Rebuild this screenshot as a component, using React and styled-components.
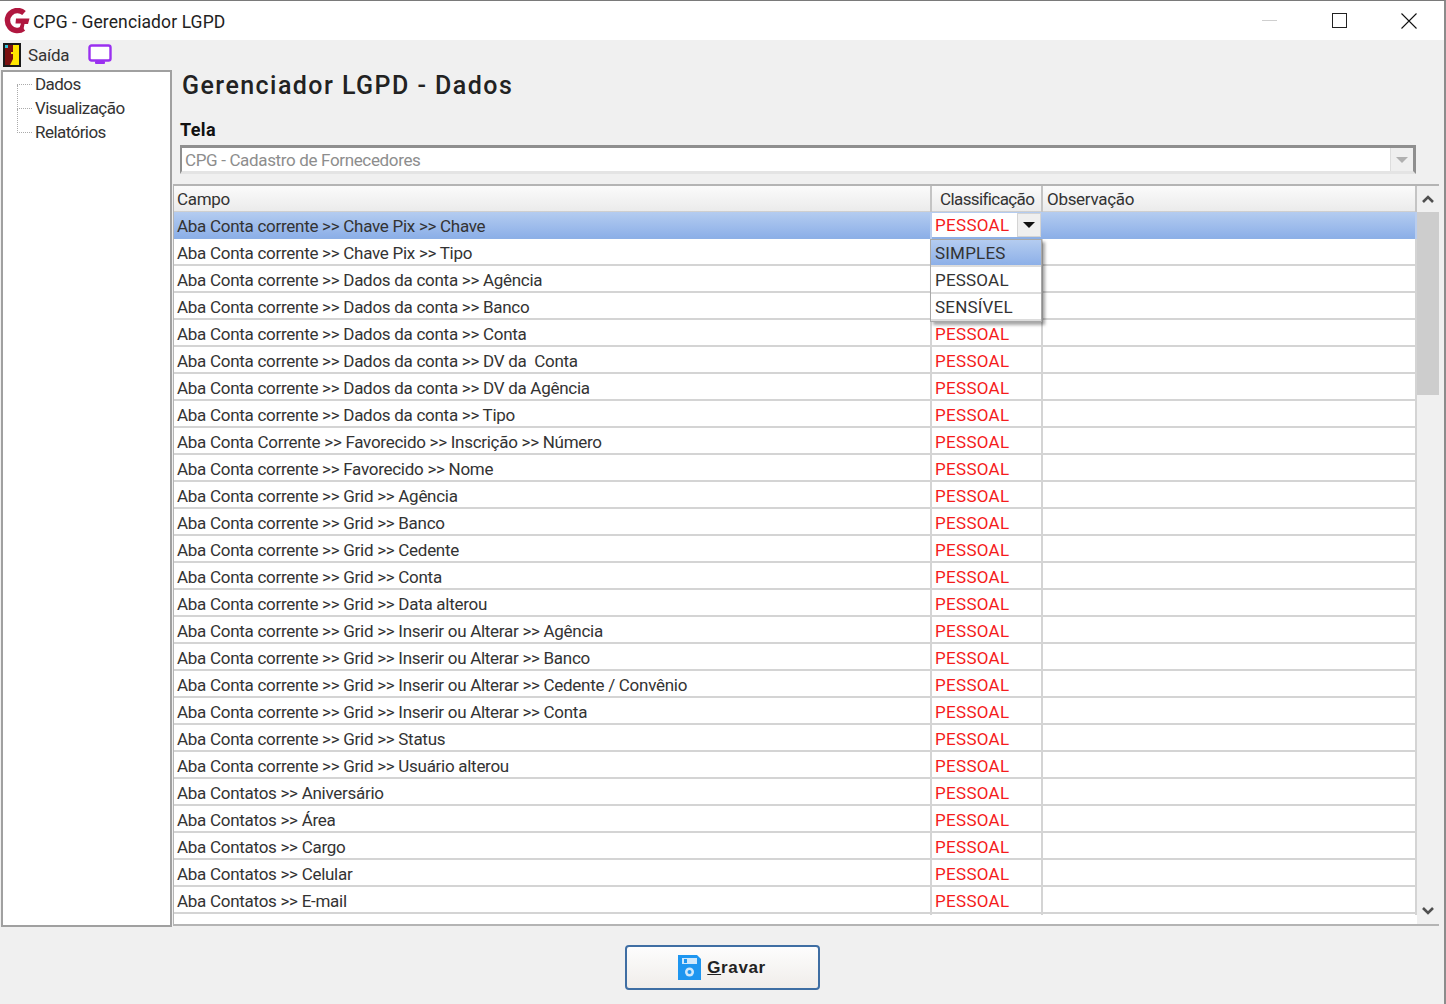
import React from "react";
import styled, { createGlobalStyle } from "styled-components";

const UI_FONT = `Roboto, "Liberation Sans", Arial, sans-serif`;

const GlobalStyle = createGlobalStyle`
  html, body { margin: 0; padding: 0; background: #f0f0f0; }
  * { box-sizing: border-box; }
  body { font-family: ${UI_FONT}; color: #1c1c1c; }
`;

const Win = styled.div`
  width: 1446px;
  height: 1004px;
  display: flex;
  flex-direction: column;
  border-top: 1px solid #7a7a7a;
  border-right: 2px solid #8c8c8c;
  overflow: hidden;
`;

const TitleBar = styled.div`
  height: 39px;
  background: #fff;
  display: flex;
  align-items: center;
  padding-left: 4px;
  flex: none;
`;

const TitleText = styled.span`
  font-size: 17.5px;
  letter-spacing: 0.1px;
  margin-left: 3px;
  padding-top: 2px;
  color: #222;
`;

const WinButtons = styled.div`
  margin-left: auto;
  display: flex;
  align-items: center;
`;

const WinButton = styled.div`
  width: 70px;
  height: 39px;
  display: flex;
  align-items: center;
  justify-content: center;
`;

const MinimizeGlyph = styled.span`
  width: 15px;
  height: 1px;
  background: #cfcfcf;
`;

const MaximizeGlyph = styled.span`
  width: 15px;
  height: 15px;
  border: 1.5px solid #222;
`;

const Toolbar = styled.div`
  height: 30px;
  flex: none;
  display: flex;
  align-items: center;
  padding-left: 3px;
  font-size: 17px;
  letter-spacing: -0.2px;
  color: #333;
`;

const ToolLabel = styled.span`
  margin-left: 7px;
  margin-right: 19px;
  padding-bottom: 1px;
`;

const Body = styled.div`
  height: 857px;
  flex: none;
  display: flex;
  padding-left: 1px;
`;

const Sidebar = styled.div`
  width: 171px;
  flex: none;
  background: #fff;
  border: 2px solid #a0a0a0;
  padding: 0 0 0 14px;
`;

const TreeItem = styled.div`
  height: 24px;
  font-size: 17px;
  letter-spacing: -0.55px;
  color: #333;
  display: flex;
  align-items: center;
`;

const TreeDots = styled.span`
  position: relative;
  width: 15px;
  margin-right: 3px;
  border-top: 1px dotted #aaa;

  &::before {
    content: "";
    position: absolute;
    left: 0;
    top: ${(p) => (p.$first ? "0" : "-24px")};
    height: ${(p) => (p.$first ? "0" : "24px")};
    border-left: 1px dotted #aaa;
  }
`;

const Main = styled.div`
  flex: 1;
  display: flex;
  flex-direction: column;
  min-width: 0;
  padding-left: 1px;
`;

const Heading = styled.h1`
  margin: 0;
  height: 51px;
  flex: none;
  padding: 0 0 0 9px;
  font-size: 25px;
  font-weight: 500;
  letter-spacing: 1.45px;
  color: #222;
  line-height: 32px;
`;

const FieldLabel = styled.div`
  font-size: 18px;
  font-weight: 700;
  letter-spacing: 0.4px;
  height: 16px;
  flex: none;
  line-height: 18px;
  padding-left: 7px;
  color: #111;
`;

const Combo = styled.div`
  height: 29px;
  flex: none;
  margin: 8px 28px 10px 7px;
  background: #fff;
  border: 3px solid #8f8f8f;
  border-bottom-color: #e4e4e4;
  border-left-width: 2px;
  display: flex;
  align-items: center;
  font-size: 17px;
  letter-spacing: -0.35px;
  color: #8d8d8d;
  padding-left: 3px;
`;

const ComboArrow = styled.div`
  margin-left: auto;
  width: 23px;
  height: 100%;
  background: #efefef;
  border-left: 1px solid #ddd;
  display: flex;
  align-items: center;
  justify-content: center;
`;

const Caret = styled.span`
  width: 0;
  height: 0;
  border-left: ${(p) => p.$size}px solid transparent;
  border-right: ${(p) => p.$size}px solid transparent;
  border-top: ${(p) => p.$size}px solid ${(p) => p.$color};
`;

const GridBox = styled.div`
  position: relative;
  height: 742px;
  flex: none;
  margin-right: 5px;
  display: flex;
  background: #fff;
  border: 2px solid #b4b4b4;
  border-left-width: 1px;
`;

const GridMain = styled.div`
  width: 1243px;
  flex: none;
  display: flex;
  flex-direction: column;
`;

const HeaderRow = styled.div`
  display: grid;
  grid-template-columns: 758px 111px 374px;
  height: 26px;
  flex: none;
  background: linear-gradient(#fbfbfb, #ebebeb);
  border-bottom: 1px solid #cfcfcf;
`;

const HeaderCell = styled.div`
  border-right: 2px solid #c4c4c4;
  padding-left: ${(p) => p.$pad}px;
  font-size: 17px;
  letter-spacing: ${(p) => p.$track}px;
  line-height: 26px;
  color: #333;
`;

const Row = styled.div`
  display: grid;
  grid-template-columns: 758px 111px 374px;
  height: 27px;
  flex: none;
  border-bottom: 2px solid ${(p) => (p.$selected ? "#8db0e6" : "#d4d4d4")};
  background: ${(p) => (p.$selected ? "linear-gradient(#b4ccf0, #8db0e8)" : "#fff")};
`;

const Cell = styled.div`
  border-right: 2px solid ${(p) => (p.$selected ? "#b9cdee" : "#d4d4d4")};
  padding-left: 3px;
  font-size: 17px;
  letter-spacing: -0.28px;
  line-height: 28px;
  color: #333;
  white-space: pre;
`;

const ClassCell = styled(Cell)`
  color: #f51c1c;
  letter-spacing: 0.3px;
`;

const EditorCell = styled.div`
  background: #fff;
  margin: 1px 2px 0 0;
  height: 24px;
  display: flex;
  align-items: center;
  justify-content: space-between;
  font-size: 17px;
  letter-spacing: 0.3px;
  color: #f51c1c;
  padding-left: 3px;
`;

const EditorArrow = styled.div`
  width: 24px;
  height: 24px;
  background: #efefef;
  border: 1px solid #d4d4d4;
  display: flex;
  align-items: center;
  justify-content: center;
`;

const Dropdown = styled.div`
  position: absolute;
  left: 756px;
  top: 53px;
  width: 112px;
  background: #fff;
  border: 1px solid #a8a8a8;
  box-shadow: 3px 3px 3px rgba(0, 0, 0, 0.35);
  z-index: 5;
`;

const DropItem = styled.div`
  height: 27px;
  line-height: 26px;
  font-size: 17px;
  padding-left: 4px;
  color: #333;
  letter-spacing: 0.2px;
  background: ${(p) => (p.$active ? "linear-gradient(#b4ccf0, #8db0e8)" : "#fff")};
  border-bottom: 2px solid #dcdcdc;
`;

const Scrollbar = styled.div`
  width: 22px;
  flex: none;
  background: #f0f0f0;
  display: flex;
  flex-direction: column;
`;

const ScrollButton = styled.div`
  height: 26px;
  flex: none;
  display: flex;
  align-items: center;
  justify-content: center;
`;

const ScrollThumb = styled.div`
  height: 183px;
  flex: none;
  background: #cdcdcd;
`;

const ScrollTrack = styled.div`
  flex: 1;
`;

const Footer = styled.div`
  flex: 1;
  display: flex;
  justify-content: center;
  align-items: flex-start;
  padding-top: 18px;
`;

const SaveButton = styled.button`
  width: 195px;
  height: 45px;
  border: 2px solid #3f6ea3;
  border-radius: 4px;
  background: linear-gradient(#fdfdfd, #f0edea);
  display: flex;
  align-items: center;
  justify-content: center;
  gap: 6px;
  font-family: "Liberation Sans", Arial, sans-serif;
  font-size: 17px;
  font-weight: 700;
  letter-spacing: 0.6px;
  color: #222;
  padding: 0;
`;

const GravarKey = styled.span`
  text-decoration: underline;
`;

const rows = [
  "Aba Conta corrente >> Chave Pix >> Chave",
  "Aba Conta corrente >> Chave Pix >> Tipo",
  "Aba Conta corrente >> Dados da conta >> Agência",
  "Aba Conta corrente >> Dados da conta >> Banco",
  "Aba Conta corrente >> Dados da conta >> Conta",
  "Aba Conta corrente >> Dados da conta >> DV da  Conta",
  "Aba Conta corrente >> Dados da conta >> DV da Agência",
  "Aba Conta corrente >> Dados da conta >> Tipo",
  "Aba Conta Corrente >> Favorecido >> Inscrição >> Número",
  "Aba Conta corrente >> Favorecido >> Nome",
  "Aba Conta corrente >> Grid >> Agência",
  "Aba Conta corrente >> Grid >> Banco",
  "Aba Conta corrente >> Grid >> Cedente",
  "Aba Conta corrente >> Grid >> Conta",
  "Aba Conta corrente >> Grid >> Data alterou",
  "Aba Conta corrente >> Grid >> Inserir ou Alterar >> Agência",
  "Aba Conta corrente >> Grid >> Inserir ou Alterar >> Banco",
  "Aba Conta corrente >> Grid >> Inserir ou Alterar >> Cedente / Convênio",
  "Aba Conta corrente >> Grid >> Inserir ou Alterar >> Conta",
  "Aba Conta corrente >> Grid >> Status",
  "Aba Conta corrente >> Grid >> Usuário alterou",
  "Aba Contatos >> Aniversário",
  "Aba Contatos >> Área",
  "Aba Contatos >> Cargo",
  "Aba Contatos >> Celular",
  "Aba Contatos >> E-mail",
];

const LogoIcon = () => (
  <svg width="26" height="26" viewBox="0 0 26 26">
    <path d="M20 5 A10 10 0 1 0 19.5 20.5" fill="none" stroke="#b0173f" strokeWidth="5.5" />
    <path d="M12 10.5 H25.5 L24 16 H20.5 L19.5 21 L15 21 L17 15.5 H11.5 Z" fill="#b0173f" />
  </svg>
);

const DoorIcon = () => (
  <svg width="18" height="24" viewBox="0 0 18 24">
    <rect width="18" height="24" fill="#1a1a1a" />
    <rect x="2" y="2" width="14" height="20" fill="#ffe600" />
    <path d="M2 2 H10 V16 L7 22 H2 Z" fill="#7a1010" />
    <rect x="2" y="2" width="3" height="3" fill="#35c5d8" />
    <rect x="8" y="9" width="2" height="2" fill="#ffe600" />
  </svg>
);

const MonitorIcon = () => (
  <svg width="24" height="22" viewBox="0 0 24 22">
    <rect x="1.5" y="1.5" width="21" height="15" rx="2" fill="#fff" stroke="#9a30f0" strokeWidth="2.4" />
    <rect x="7" y="17" width="10" height="3" rx="1" fill="#9a30f0" />
  </svg>
);

const FloppyIcon = () => (
  <svg width="23" height="25" viewBox="0 0 23 25">
    <path d="M0 0 H19 L23 4 V25 H0 Z" fill="#1e96f0" />
    <rect x="4" y="3" width="15" height="6" fill="#cfe8fb" />
    <rect x="6" y="4" width="3" height="4" fill="#1e96f0" />
    <circle cx="11.5" cy="17" r="4.5" fill="#cfe8fb" />
    <circle cx="11.5" cy="17" r="2" fill="#1e96f0" />
  </svg>
);

const CloseIcon = () => (
  <svg width="16" height="16" viewBox="0 0 16 16">
    <path d="M0.5 0.5 L15.5 15.5 M15.5 0.5 L0.5 15.5" stroke="#111" strokeWidth="1.1" fill="none" />
  </svg>
);

const ChevronIcon = ({ up }) => (
  <svg width="14" height="10" viewBox="0 0 14 10">
    <path
      d={up ? "M2 8 L7 3 L12 8" : "M2 2 L7 7 L12 2"}
      fill="none"
      stroke="#505050"
      strokeWidth="2.6"
    />
  </svg>
);

export default function App() {
  return (
    <>
      <GlobalStyle />
      <Win>
        <TitleBar>
          <LogoIcon />
          <TitleText>CPG - Gerenciador LGPD</TitleText>
          <WinButtons>
            <WinButton><MinimizeGlyph /></WinButton>
            <WinButton><MaximizeGlyph /></WinButton>
            <WinButton><CloseIcon /></WinButton>
          </WinButtons>
        </TitleBar>
        <Toolbar>
          <DoorIcon />
          <ToolLabel>Saída</ToolLabel>
          <MonitorIcon />
        </Toolbar>
        <Body>
          <Sidebar>
            <TreeItem><TreeDots $first />Dados</TreeItem>
            <TreeItem><TreeDots />Visualização</TreeItem>
            <TreeItem><TreeDots />Relatórios</TreeItem>
          </Sidebar>
          <Main>
            <Heading>Gerenciador LGPD - Dados</Heading>
            <FieldLabel>Tela</FieldLabel>
            <Combo>
              CPG - Cadastro de Fornecedores
              <ComboArrow><Caret $size={6} $color="#b0b0b0" /></ComboArrow>
            </Combo>
            <GridBox>
              <GridMain>
                <HeaderRow>
                  <HeaderCell $pad={3} $track={-0.3}>Campo</HeaderCell>
                  <HeaderCell $pad={8} $track={-0.6}>Classificação</HeaderCell>
                  <HeaderCell $pad={4} $track={-0.3}>Observação</HeaderCell>
                </HeaderRow>
                {rows.map((text, i) => (
                  <Row key={text} $selected={i === 0}>
                    <Cell $selected={i === 0}>{text}</Cell>
                    {i === 0 ? (
                      <EditorCell>
                        PESSOAL
                        <EditorArrow><Caret $size={6} $color="#111" /></EditorArrow>
                      </EditorCell>
                    ) : i > 3 ? (
                      <ClassCell>PESSOAL</ClassCell>
                    ) : (
                      <Cell />
                    )}
                    <Cell $selected={i === 0} />
                  </Row>
                ))}
              </GridMain>
              <Dropdown>
                <DropItem $active>SIMPLES</DropItem>
                <DropItem>PESSOAL</DropItem>
                <DropItem>SENSÍVEL</DropItem>
              </Dropdown>
              <Scrollbar>
                <ScrollButton><ChevronIcon up /></ScrollButton>
                <ScrollThumb />
                <ScrollTrack />
                <ScrollButton><ChevronIcon /></ScrollButton>
              </Scrollbar>
            </GridBox>
          </Main>
        </Body>
        <Footer>
          <SaveButton>
            <FloppyIcon />
            <span><GravarKey>G</GravarKey>ravar</span>
          </SaveButton>
        </Footer>
      </Win>
    </>
  );
}
